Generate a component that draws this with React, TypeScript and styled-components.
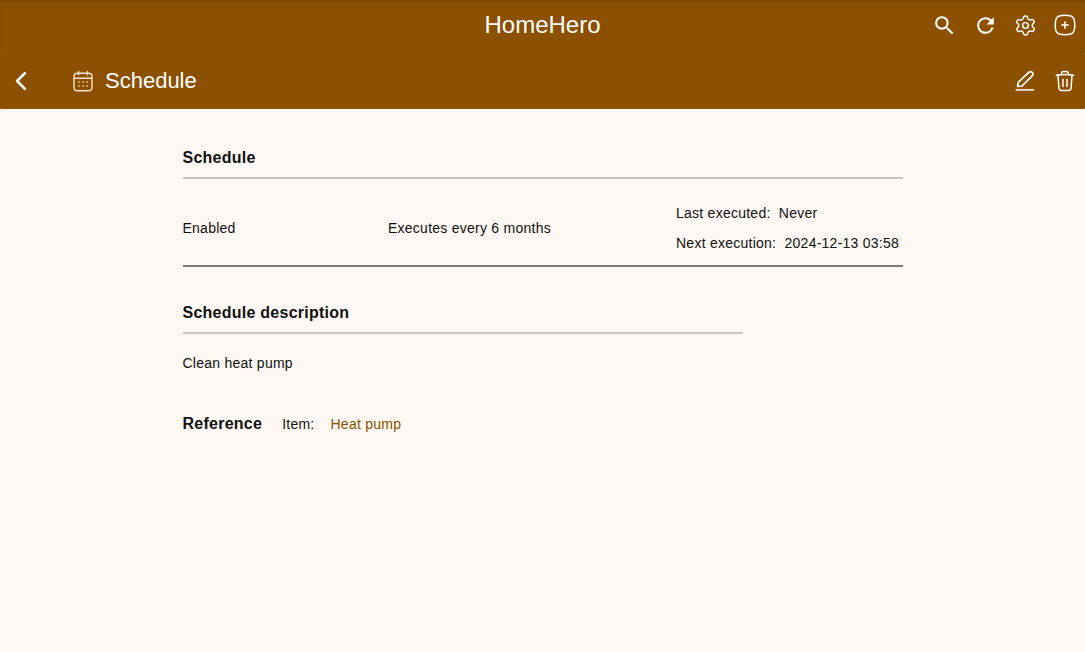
import React, { FC } from "react";
import styled, { createGlobalStyle } from "styled-components";
import { MdSearch, MdRefresh } from "react-icons/md";
import { TbSquareRoundedPlus } from "react-icons/tb";
import { IoChevronBack } from "react-icons/io5";
import { Settings } from "lucide-react";

const GlobalStyle = createGlobalStyle`
    html, body {
        margin: 0;
        padding: 0;
        height: 100%;
        background: #fdf8f3;
    }
    body {
        font-family: "Liberation Sans", Arial, sans-serif;
        color: #111;
        overflow: hidden;
    }
`;

const CalendarIcon: FC = () => (
    <svg width="22" height="22" viewBox="0 0 22 22" fill="none" stroke="#f3e3cf" strokeWidth="1.4" strokeLinecap="round">
        <rect x="2" y="3.2" width="18" height="17.6" rx="3.4" />
        <path d="M2 8.2h18M6.6 1.4v3.4M15.4 1.4v3.4" />
        <path d="M6.7 12h.7M10.7 12h.7M14.7 12h.7M6.7 16h.7M10.7 16h.7M14.7 16h.7" strokeWidth="1.5" stroke="#e0c4a0" />
    </svg>
);

const PencilIcon: FC = () => (
    <svg width="20" height="22" viewBox="0 0 20 22" fill="none" stroke="#fff" strokeWidth="1.7" strokeLinejoin="round" strokeLinecap="round">
        <path d="M2.6 16.4l.8-4.2L13.8 2.4c1-1 2.4-1 3.4 0s1 2.4 0 3.4L7 16l-4.4.4z" />
        <path d="M1.2 19.8h17.2" stroke="#f3e3cf" />
    </svg>
);

const TrashIcon: FC = () => (
    <svg width="20" height="22" viewBox="0 0 20 22" fill="none" stroke="#fff" strokeWidth="1.5" strokeLinejoin="round" strokeLinecap="round">
        <path d="M1.2 5.2c5-.8 12.6-.8 17.6 0" />
        <path d="M6.6 4.6V3.4c0-1.1.8-1.9 1.9-1.9h3c1.1 0 1.9.8 1.9 1.9v1.2" />
        <path d="M3 5.4l.9 12.4c.1 1.6 1.3 2.8 2.9 2.8h6.4c1.6 0 2.8-1.2 2.9-2.8L17 5.4" />
        <path d="M8 9.4v7M12 9.4v7" />
    </svg>
);

const App: FC = () => (
    <Page>
        <GlobalStyle />
        <TopBar>
            <AppTitle>HomeHero</AppTitle>
            <TopActions>
                <SearchButton><MdSearch size={25} /></SearchButton>
                <IconButton><MdRefresh size={25} /></IconButton>
                <IconButton><Settings size={23} strokeWidth={1.5} /></IconButton>
                <IconButton><TbSquareRoundedPlus size={26} strokeWidth={1.4} /></IconButton>
            </TopActions>
        </TopBar>
        <SubBar>
            <BackButton><IoChevronBack size={28} /></BackButton>
            <PageTitle>
                <CalendarIcon />
                <span>Schedule</span>
            </PageTitle>
            <SubActions>
                <IconButton><PencilIcon /></IconButton>
                <IconButton><TrashIcon /></IconButton>
            </SubActions>
        </SubBar>
        <Content>
            <SectionTitle>Schedule</SectionTitle>
            <InfoRow>
                <div>Enabled</div>
                <div>Executes every 6 months</div>
                <Executions>
                    <span>Last executed:&nbsp; Never</span>
                    <span>Next execution:&nbsp; 2024-12-13 03:58</span>
                </Executions>
            </InfoRow>
            <Description>
                <SectionTitle>Schedule description</SectionTitle>
                <DescriptionText>Clean heat pump</DescriptionText>
            </Description>
            <ReferenceRow>
                <ReferenceTitle>Reference</ReferenceTitle>
                <ReferenceLabel>Item:</ReferenceLabel>
                <ReferenceLink href="#">Heat pump</ReferenceLink>
            </ReferenceRow>
        </Content>
    </Page>
);

export default App;

const Page = styled.div`
    min-height: 652px;
    background: #fdf8f3;
`;

const TopBar = styled.header`
    height: 53px;
    display: flex;
    align-items: center;
    justify-content: center;
    position: relative;
    background: #8b5000;
    box-shadow: inset 0 2px 2px -1px rgba(0, 0, 0, 0.15);
`;

const AppTitle = styled.div`
    font-size: 24px;
    color: #fff;
    margin-top: -3px;
`;

const TopActions = styled.div`
    position: absolute;
    top: 13px;
    right: 0;
    display: flex;
`;

const IconButton = styled.div`
    width: 40px;
    height: 24px;
    display: flex;
    align-items: center;
    justify-content: center;
    color: #fff;
`;

const SearchButton = styled(IconButton)`
    padding-right: 1px;
    width: 39px;
    margin-right: 1px;
    box-sizing: border-box;
`;

const SubBar = styled.div`
    height: 56px;
    display: flex;
    align-items: center;
    background: #8b5000;
    border-radius: 1px;
`;

const BackButton = styled.div`
    width: 72px;
    padding-left: 7px;
    box-sizing: border-box;
    display: flex;
    color: #fff;
`;

const PageTitle = styled.div`
    display: flex;
    align-items: center;
    gap: 11px;
    font-size: 22px;
    color: #fff;
`;

const SubActions = styled.div`
    margin-left: auto;
    display: flex;
`;

const Content = styled.main`
    width: 720.5px;
    margin-left: 182.5px;
    padding-top: 40px;
    font-size: 14px;
    letter-spacing: 0.25px;
    line-height: 20px;
`;

const SectionTitle = styled.div`
    font-size: 16px;
    font-weight: 700;
    letter-spacing: 0.25px;
    line-height: 18px;
    padding-bottom: 10px;
    border-bottom: 2px solid #c9c6c2;
`;

const InfoRow = styled.div`
    height: 74px;
    padding-top: 12px;
    display: grid;
    grid-template-columns: 205.5px 288px 1fr;
    align-items: center;
    border-bottom: 2px solid #7f7b77;
`;

const Executions = styled.div`
    display: flex;
    flex-direction: column;
    gap: 10px;
    white-space: nowrap;
`;

const Description = styled.section`
    width: 560px;
    margin-top: 37px;
`;

const DescriptionText = styled.div`
    margin-top: 19px;
`;

const ReferenceRow = styled.div`
    margin-top: 41px;
    display: flex;
    align-items: center;
`;

const ReferenceTitle = styled.div`
    font-size: 16px;
    font-weight: 700;
    letter-spacing: 0.25px;
    margin-right: 20px;
`;

const ReferenceLabel = styled.div`
    margin-right: 16px;
`;

const ReferenceLink = styled.a`
    color: #8b5000;
    text-decoration: none;
`;
